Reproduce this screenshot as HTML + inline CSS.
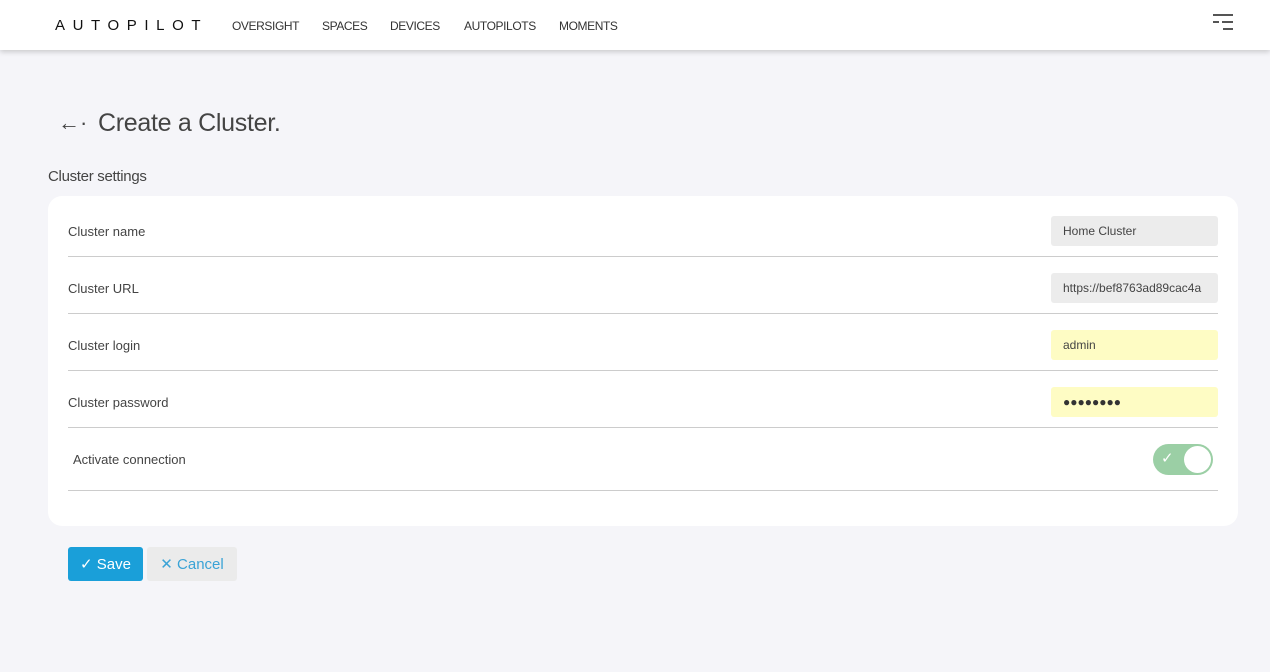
<!DOCTYPE html>
<html><head><meta charset="utf-8"><style>
*{box-sizing:border-box;margin:0;padding:0}
body{width:1270px;height:672px;background:#f5f5f9;font-family:"Liberation Sans",sans-serif;color:#444;position:relative;overflow:hidden}
.hdr{position:absolute;left:0;top:0;width:1270px;height:50px;background:#fff;box-shadow:0 2px 5px rgba(0,0,0,.18)}
.logo{position:absolute;left:55px;top:17px;font-size:15px;letter-spacing:7.6px;color:#111}
.nav{position:absolute;top:19px;font-size:12px;color:#333;letter-spacing:-0.4px}
.menu span{position:absolute;height:2px;background:#555}
h1{position:absolute;left:98px;top:109px;font-size:25px;font-weight:normal;color:#444;letter-spacing:-0.3px}
.arrow{position:absolute;left:58px;top:110px;font-size:22px;color:#444}
.sub{position:absolute;left:48px;top:168px;font-size:15px;color:#444;letter-spacing:-0.3px}
.card{position:absolute;left:48px;top:196px;width:1190px;height:330px;background:#fff;border-radius:14px}
.row{position:absolute;left:20px;width:1150px;border-bottom:1px solid #ccc}
.lbl{position:absolute;left:20px;font-size:13px;color:#444}
.inp{position:absolute;left:1003px;width:167px;height:30px;border-radius:3px;font-size:12px;padding:8px 12px;color:#444;white-space:nowrap;overflow:hidden}
.g{background:#ececec}.y{background:#fefcc4}
.tog{position:absolute;left:1105px;top:248px;width:60px;height:31px;border-radius:16px;background:#9bcfa5}
.knob{position:absolute;right:2px;top:2px;width:27px;height:27px;border-radius:50%;background:#fff}
.btn{position:absolute;top:547px;height:34px;border-radius:3px;font-size:15px;padding:8px 0;text-align:center}
</style></head><body>
<div class="hdr">
<div class="logo">AUTOPILOT</div>
<div class="nav" style="left:232px">OVERSIGHT</div>
<div class="nav" style="left:322px">SPACES</div>
<div class="nav" style="left:390px">DEVICES</div>
<div class="nav" style="left:464px">AUTOPILOTS</div>
<div class="nav" style="left:559px">MOMENTS</div>
<div class="menu"><span style="left:1213px;top:14px;width:20px"></span><span style="left:1213px;top:21px;width:6px"></span><span style="left:1222px;top:21px;width:11px"></span><span style="left:1223px;top:28px;width:10px"></span></div>
</div>
<div class="arrow">←·</div>
<h1>Create a Cluster.</h1>
<div class="sub">Cluster settings</div>
<div class="card">
<div class="lbl" style="top:28px">Cluster name</div><div class="inp g" style="top:20px">Home Cluster</div><div class="row" style="top:0;height:61px"></div>
<div class="lbl" style="top:85px">Cluster URL</div><div class="inp g" style="top:77px">https://bef8763ad89cac4a</div><div class="row" style="top:61px;height:57px"></div>
<div class="lbl" style="top:142px">Cluster login</div><div class="inp y" style="top:134px">admin</div><div class="row" style="top:118px;height:57px"></div>
<div class="lbl" style="top:199px">Cluster password</div><div class="inp y" style="top:191px;font-size:12px;letter-spacing:0px;padding-top:8px;color:#333">●●●●●●●●</div><div class="row" style="top:175px;height:57px"></div>
<div class="lbl" style="top:256px;left:25px">Activate connection</div>
<div class="tog"><span style="position:absolute;left:8px;top:5px;color:#fff;font-size:15px">✓</span><div class="knob"></div></div>
<div class="row" style="top:232px;height:63px"></div>
</div>
<div class="btn" style="left:68px;width:75px;background:#1a9fd9;color:#fff">✓ Save</div>
<div class="btn" style="left:147px;width:90px;background:#ebebeb;color:#3aa3d6">✕ Cancel</div>
</body></html>
